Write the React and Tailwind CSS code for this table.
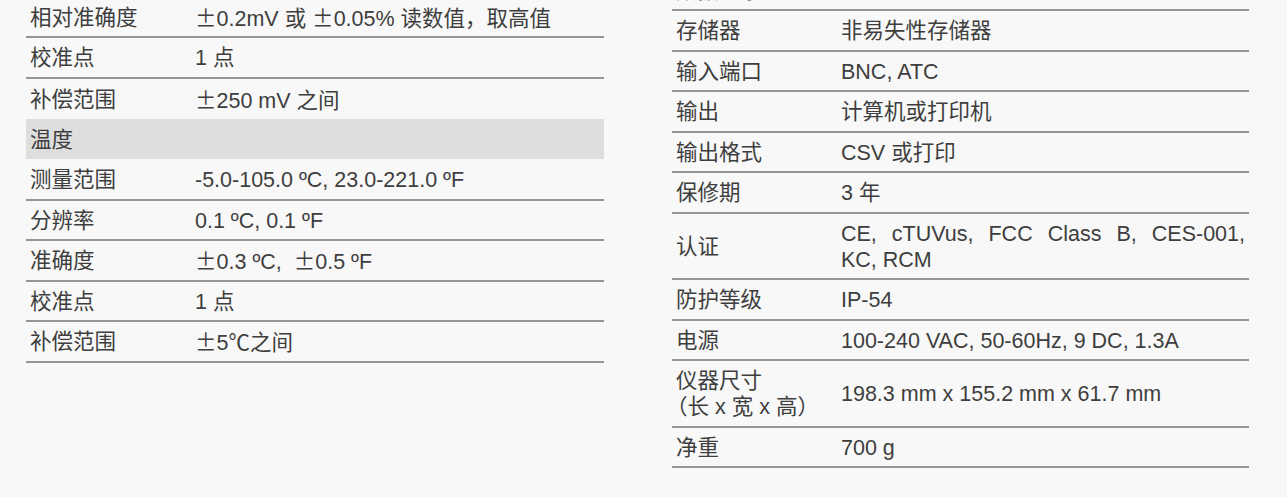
import React from 'react';

const PM = <span className="font-['Noto_Sans_CJK_SC']">±</span>;

const leftRows = [
    { label: '相对准确度', value: <>{PM}0.2mV 或 {PM}0.05% 读数值，取高值</> },
    { label: '校准点', value: '1 点' },
    { label: '补偿范围', value: <>{PM}250 mV 之间</>, noLine: true },
    { header: '温度' },
    { label: '测量范围', value: '-5.0-105.0 ºC, 23.0-221.0 ºF', extra: true },
    { label: '分辨率', value: '0.1 ºC, 0.1 ºF' },
    { label: '准确度', value: <>{PM}0.3 ºC, &nbsp;{PM}0.5 ºF</> },
    { label: '校准点', value: '1 点' },
    { label: '补偿范围', value: <>{PM}5℃之间</> },
];

const rightRows = [
    { label: '数据记录', value: '500' },
    { label: '存储器', value: '非易失性存储器' },
    { label: '输入端口', value: 'BNC, ATC' },
    { label: '输出', value: '计算机或打印机' },
    { label: '输出格式', value: 'CSV 或打印' },
    { label: '保修期', value: '3 年' },
    {
        label: '认证',
        tall: true,
        value: (
            <>
                <div className="text-justify [text-align-last:justify]">CE, cTUVus, FCC Class B, CES-001,</div>
                <div>KC, RCM</div>
            </>
        ),
    },
    { label: '防护等级', value: 'IP-54' },
    { label: '电源', value: '100-240 VAC, 50-60Hz, 9 DC, 1.3A' },
    {
        label: (
            <>
                <div>仪器尺寸</div>
                <div className="-ml-[10px]">（长 x 宽 x 高）</div>
            </>
        ),
        tall: true,
        value: '198.3 mm x 155.2 mm x 61.7 mm',
    },
    { label: '净重', value: '700 g' },
];

const Row = ({ label, value, noLine, tall, extra }) => (
    <div
        className={`flex items-center pt-[2px] leading-[26px] ${tall ? 'h-[66.5px]' : extra ? 'h-[41.5px]' : 'h-[40.5px]'} ${
            noLine ? '' : 'border-b-2 border-[#959595]'
        }`}
    >
        <div className="w-[165px] shrink-0 pl-1">{label}</div>
        <div className="flex-1 pl-1 pr-1">{value}</div>
    </div>
);

const SpecTable = ({ rows, className }) => (
    <div className={className}>
        {rows.map((row, i) =>
            row.header ? (
                <div key={i} className="h-[40px] flex items-center bg-[#dedede] pl-1 pt-[2px] leading-[26px]">
                    {row.header}
                </div>
            ) : (
                <Row key={i} {...row} />
            )
        )}
    </div>
);

export default function App() {
    return (
        <div className="min-h-screen bg-[#f8f8f8] text-[#3e3e3e] text-[21.5px] font-['Liberation_Sans','Noto_Sans_CJK_SC',sans-serif] overflow-hidden">
            <div className="flex pl-[26px] gap-[68px]">
                <SpecTable rows={leftRows} className="w-[578px] -mt-[2.5px]" />
                <SpecTable rows={rightRows} className="w-[577px] -mt-[29.5px]" />
            </div>
        </div>
    );
}
